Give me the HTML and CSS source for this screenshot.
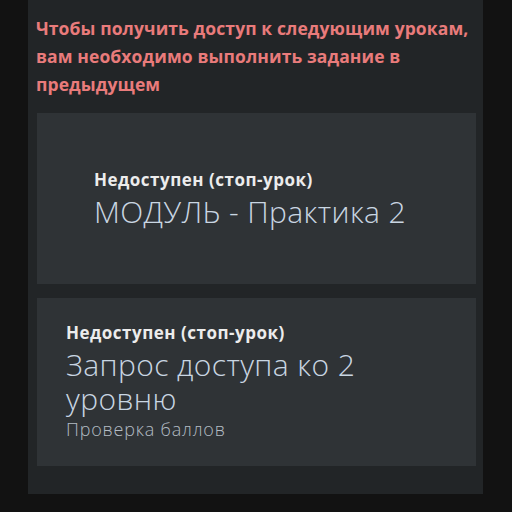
FILE: index.html
```html
<!DOCTYPE html>
<html lang="ru">
<head>
<meta charset="utf-8">
<link rel="stylesheet" href="styles.css">
</head>
<body>
<div class="panel">
  <p class="notice">Чтобы получить доступ к следующим урокам, вам необходимо выполнить задание в предыдущем</p>
  <div class="card card-wide">
    <div class="label">Недоступен (стоп-урок)</div>
    <div class="title">МОДУЛЬ - Практика 2</div>
  </div>
  <div class="card card-narrow">
    <div class="label">Недоступен (стоп-урок)</div>
    <div class="title title-wrap">Запрос доступа ко 2 уровню</div>
    <div class="sub">Проверка баллов</div>
  </div>
</div>
</body>
</html>
```

FILE: styles.css
```css
html, body {
  margin: 0;
  padding: 0;
  background: #121212;
  font-family: "Open Sans", "Noto Sans", sans-serif;
}
.panel {
  margin-left: 28px;
  width: 455px;
  height: 494px;
  background: #222527;
  padding: 14px 7px 0 9px;
  box-sizing: border-box;
  display: flex;
  flex-direction: column;
}
.notice {
  margin: 0 0 0 -1px;
  color: #e97b7b;
  font-weight: 700;
  font-size: 17.5px;
  letter-spacing: 0.1px;
  line-height: 28px;
}
.card {
  background: #2f3336;
  box-sizing: border-box;
}
.card-wide {
  margin-top: 15px;
  height: 171px;
  padding: 56px 20px 0 57px;
}
.card-narrow {
  margin-top: 14px;
  height: 168px;
  padding: 24px 20px 0 29px;
}
.label {
  color: #ececec;
  font-weight: 700;
  font-size: 17px;
  letter-spacing: 0.5px;
  line-height: 22px;
}
.title {
  color: #c9d6e2;
  font-weight: 300;
  font-size: 30px;
  letter-spacing: 0.4px;
  line-height: 34px;
}
.card-wide .title {
  margin-top: 4px;
}
.card-narrow .title {
  margin-top: 4px;
}
.title-wrap {
  max-width: 330px;
}
.sub {
  margin-top: -1px;
  color: #b3bcc4;
  font-weight: 300;
  font-size: 18px;
  letter-spacing: 0.8px;
  line-height: 28px;
}
```
